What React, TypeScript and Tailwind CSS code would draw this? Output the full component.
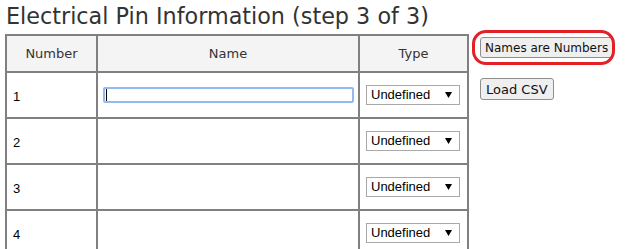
import React from "react";

const rows = [1, 2, 3, 4];

function Caret() {
  return (
    <svg width="7" height="6" viewBox="0 0 7 6" className="shrink-0">
      <path d="M0 0 H7 L3.5 6 Z" fill="#000" />
    </svg>
  );
}

function TypeSelect() {
  return (
    <div className="flex h-[20px] w-[94px] items-center justify-between border border-[#a9a9a9] bg-white pl-[4px] pr-[7px] font-['Liberation_Sans',Arial,sans-serif] text-[13px] text-black">
      <span>Undefined</span>
      <Caret />
    </div>
  );
}

export default function App() {
  return (
    <div className="relative h-[249px] w-[631px] overflow-hidden bg-white pl-[5px] font-['DejaVu_Sans',Verdana,sans-serif] text-[#333]">
      <h1 className="pt-[3px] pl-[1px] text-[22.3px] leading-[26px] font-normal whitespace-nowrap text-[#333]">
        Electrical Pin Information (step 3 of 3)
      </h1>

      <div className="mt-[5px] flex items-start">
        <table className="w-[462px] shrink-0 table-fixed border-collapse border-2 border-[#808080]">
          <colgroup>
            <col className="w-[91px]" />
            <col className="w-[262px]" />
            <col className="w-[109px]" />
          </colgroup>
          <thead>
            <tr className="h-[37px] bg-[#f4f4f4] text-[13px]">
              <th className="border-2 border-[#808080] font-normal">Number</th>
              <th className="border-2 border-[#808080] font-normal">Name</th>
              <th className="border-2 border-[#808080] font-normal">Type</th>
            </tr>
          </thead>
          <tbody>
            {rows.map((n) => (
              <tr key={n} className="h-[46px]">
                <td className="border-2 border-[#808080] pl-[6px] pt-[3px] font-['Liberation_Sans',Arial,sans-serif] text-[13px] text-black">
                  {n}
                </td>
                <td className="border-2 border-[#808080] px-[5px]">
                  {n === 1 && (
                    <div className="flex h-[16px] w-[251px] items-center rounded-[2px] border-2 border-[#95b8f3] bg-white pl-[1px]">
                      <span className="h-[12px] w-px bg-black" />
                    </div>
                  )}
                </td>
                <td className="border-2 border-[#808080] pl-[6px]">
                  <TypeSelect />
                </td>
              </tr>
            ))}
          </tbody>
        </table>

        <div className="ml-[11px] flex w-[152px] shrink-0 flex-col items-start gap-[20px] pt-[3px]">
          <button className="h-[21px] whitespace-nowrap rounded-[3px] border border-[#8f8f8f] bg-[#efefef] px-[4px] text-[12px] leading-none text-[#111]">
            Names are Numbers
          </button>
          <button className="h-[22px] whitespace-nowrap rounded-[3px] border border-[#8f8f8f] bg-[#efefef] px-[5px] text-[13px] leading-none text-[#111]">
            Load CSV
          </button>
        </div>

        <div className="flex shrink-0 flex-col pt-[4px]">
          <div className="h-[12px] w-[3px] bg-[#f3b35b]" />
          <span className="mt-[22px] text-[12px] text-[#333]">1</span>
        </div>
      </div>

      <div className="pointer-events-none absolute left-[472px] top-[30px] h-[35px] w-[143px] rounded-[14px] border-[3px] border-[#e41f26]" />
    </div>
  );
}
